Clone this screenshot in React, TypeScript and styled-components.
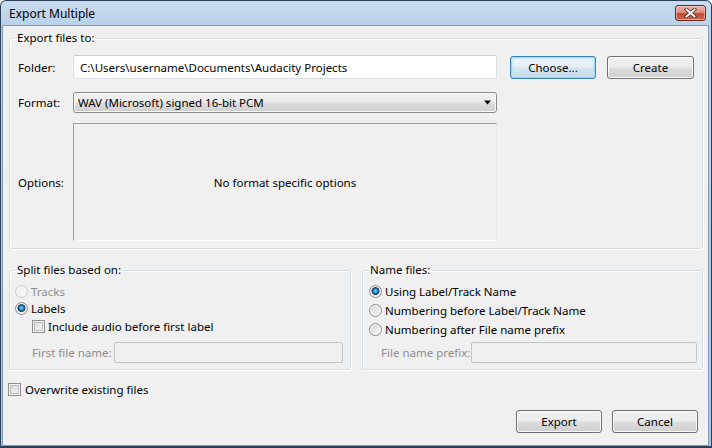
import React from "react";
import styled, { createGlobalStyle } from "styled-components";

const Global = createGlobalStyle`
  html, body { margin: 0; padding: 0; background: #ffffff; }
  body {
    font-family: "Noto Sans", "Open Sans", sans-serif;
    font-size: 11.5px;
    color: #000;
  }
  * { box-sizing: border-box; }
`;

const Window = styled.div`
  width: 712px;
  height: 448px;
  display: flex;
  flex-direction: column;
  background: linear-gradient(to bottom, #c9dbef 0px, #bad1eb 25px, #a9c4e5 100%);
  border: 1px solid #2c405a;
  border-bottom-width: 2px;
  border-radius: 6px 6px 0 0;
  padding: 0 2px 0 1px;
  overflow: hidden;
`;

const TitleBar = styled.div`
  height: 24px;
  flex: none;
  display: flex;
  align-items: flex-start;
  padding: 0 3px 0 7px;
`;

const Title = styled.span`
  line-height: 16px;
  margin-top: 5px;
  font-size: 12px;
  color: #000;
`;

const CloseButton = styled.div`
  margin-left: auto;
  margin-top: 4px;
  width: 31px;
  height: 16px;
  border: 1px solid #6b2a20;
  border-radius: 3px;
  background: linear-gradient(to bottom, #ecb3a6 0%, #dc8f7e 45%, #c9472e 55%, #d0654b 100%);
  box-shadow: inset 0 0 0 1px rgba(255, 220, 210, 0.55);
  display: flex;
  align-items: center;
  justify-content: center;
`;

const Content = styled.div`
  flex: 1;
  display: flex;
  flex-direction: column;
  background: #f0f0f0;
  border: 1px solid #7e9bbd;
  border-bottom-color: #3bb2e2;
  padding: 5px 5px 12px 6px;
`;

const Group = styled.fieldset`
  margin: 0;
  padding: 0;
  min-width: 0;
  border: 1px solid #d5dfe5;
  border-radius: 3px;
  box-shadow: 1px 1px 0 #ffffff, inset 1px 1px 0 #ffffff;
`;

const Legend = styled.legend`
  padding: 0 2px;
  margin-left: 5px;
  line-height: 14px;
  color: #000;
`;

const GroupBody = styled.div<{ $pad: string }>`
  display: flex;
  flex-direction: column;
  padding: ${(p) => p.$pad};
`;

const FieldRow = styled.div<{ $h: number; $mt?: number }>`
  display: flex;
  align-items: center;
  height: ${(p) => p.$h}px;
  margin-top: ${(p) => p.$mt ?? 0}px;
`;

const FieldLabel = styled.span`
  width: 55px;
  flex: none;
`;

const TextInput = styled.div`
  width: 424px;
  height: 24px;
  background: #ffffff;
  border: 1px solid #dde1e6;
  border-top-color: #c9ced4;
  border-radius: 2px;
  padding-left: 6px;
  display: flex;
  align-items: center;
  white-space: nowrap;
`;

const Button = styled.div<{ $w: number; $ml?: number; $default?: boolean }>`
  width: ${(p) => p.$w}px;
  height: 23px;
  margin-left: ${(p) => p.$ml ?? 0}px;
  flex: none;
  display: flex;
  align-items: center;
  justify-content: center;
  border: 1px solid ${(p) => (p.$default ? "#3c7fb1" : "#707070")};
  border-radius: 3px;
  background: ${(p) =>
    p.$default
      ? "linear-gradient(to bottom, #eef5fa 0%, #e4eef6 48%, #d5e4ef 52%, #c9dce9 100%)"
      : "linear-gradient(to bottom, #f2f2f2 0%, #ebebeb 48%, #dddddd 52%, #cfcfcf 100%)"};
  box-shadow: ${(p) =>
    p.$default
      ? "inset 0 0 0 1px #97dbf7, inset 0 0 2px 2px rgba(170, 225, 250, 0.5)"
      : "inset 0 0 0 1px #fbfbfb"};
  color: #000;
`;

const Select = styled.div`
  width: 424px;
  height: 21px;
  display: flex;
  align-items: center;
  justify-content: space-between;
  padding: 0 4px 0 4px;
  border: 1px solid #8b8b8b;
  border-radius: 3px;
  background: linear-gradient(to bottom, #f2f2f2 0%, #ebebeb 48%, #dddddd 52%, #cfcfcf 100%);
  box-shadow: inset 0 0 0 1px #fbfbfb;
  white-space: nowrap;
`;

const OptionsPanel = styled.div`
  width: 424px;
  height: 118px;
  border: 1px solid;
  border-color: #a0a0a0 #e8e8e8 #ffffff #a0a0a0;
  display: flex;
  align-items: center;
  justify-content: center;
`;

const BottomRow = styled.div`
  display: flex;
  gap: 11px;
  margin-top: 14px;
`;

const HalfGroup = styled(Group)<{ $w: number }>`
  width: ${(p) => p.$w}px;
  flex: none;
`;

const OptionRow = styled.label<{ $h: number; $indent?: number; $disabled?: boolean }>`
  display: flex;
  align-items: center;
  gap: 3px;
  height: ${(p) => p.$h}px;
  margin-left: ${(p) => p.$indent ?? 0}px;
  color: ${(p) => (p.$disabled ? "#8d8d8d" : "#000")};
  white-space: nowrap;
`;

const Radio = styled.span<{ $checked?: boolean; $disabled?: boolean }>`
  width: 13px;
  height: 13px;
  flex: none;
  border-radius: 50%;
  border: 1px solid ${(p) => (p.$disabled ? "#c9c9c9" : "#8e8f8f")};
  background: ${(p) =>
    p.$checked
      ? "radial-gradient(circle at 50% 45%, #a6e2fb 0px, #3b98d6 1.6px, #14558f 3px, #2b4c6a 3.8px, rgba(255,255,255,0) 4.3px), linear-gradient(135deg, #d4d4d4, #fbfbfb)"
      : p.$disabled
      ? "linear-gradient(135deg, #ececec, #fafafa)"
      : "linear-gradient(135deg, #d2d2d2, #fbfbfb)"};
  box-shadow: inset 0 0 0 1px ${(p) => (p.$disabled ? "#f6f6f6" : "#f4f4f4")};
`;

const Check = styled.span`
  width: 13px;
  height: 13px;
  flex: none;
  border: 1px solid #8e8f8f;
  background: linear-gradient(135deg, #d6d6d6, #f9f9f9);
  box-shadow: inset 0 0 0 1px #f6f6f6, inset 0 0 0 2px #b9bcc0;
`;

const SubRow = styled.div<{ $indent: number; $mt: number }>`
  display: flex;
  align-items: center;
  height: 21px;
  margin-left: ${(p) => p.$indent}px;
  margin-top: ${(p) => p.$mt}px;
`;

const SubLabel = styled.span<{ $w: number }>`
  width: ${(p) => p.$w}px;
  flex: none;
  color: #8d8d8d;
  white-space: nowrap;
`;

const DisabledInput = styled.div`
  flex: 1;
  height: 21px;
  border: 1px solid #c2c4c7;
  border-radius: 2px;
  background: #f0f0f0;
`;

const OverwriteRow = styled.label`
  display: flex;
  align-items: center;
  gap: 4px;
  height: 16px;
  margin-top: 11px;
  margin-left: -1px;
`;

const ActionRow = styled.div`
  margin-top: auto;
  display: flex;
  justify-content: flex-end;
  gap: 10px;
  padding-right: 5px;
`;

const CloseGlyph = () => (
  <svg width="13" height="10" viewBox="0 0 13 10">
    <path d="M2.5 1.5 L10.5 8.5 M10.5 1.5 L2.5 8.5" stroke="#4b3b39" strokeWidth="3.6" strokeLinecap="square" />
    <path d="M2.5 1.5 L10.5 8.5 M10.5 1.5 L2.5 8.5" stroke="#ffffff" strokeWidth="1.9" strokeLinecap="square" />
  </svg>
);

const Arrow = () => (
  <svg width="9" height="5" viewBox="0 0 9 5">
    <path d="M1 0.5 H8 L4.5 4.5 Z" fill="#000" />
  </svg>
);

export default function App() {
  return (
    <>
      <Global />
      <Window>
        <TitleBar>
          <Title>Export Multiple</Title>
          <CloseButton>
            <CloseGlyph />
          </CloseButton>
        </TitleBar>
        <Content>
          <Group>
            <Legend>Export files to:</Legend>
            <GroupBody $pad="10px 8px 7px 8px">
              <FieldRow $h={24}>
                <FieldLabel>Folder:</FieldLabel>
                <TextInput>C:\Users\username\Documents\Audacity Projects</TextInput>
                <Button $w={86} $ml={13} $default>
                  Choose...
                </Button>
                <Button $w={87} $ml={11}>
                  Create
                </Button>
              </FieldRow>
              <FieldRow $h={21} $mt={13}>
                <FieldLabel>Format:</FieldLabel>
                <Select>
                  <span>WAV (Microsoft) signed 16-bit PCM</span>
                  <Arrow />
                </Select>
              </FieldRow>
              <FieldRow $h={118} $mt={10}>
                <FieldLabel>Options:</FieldLabel>
                <OptionsPanel>No format specific options</OptionsPanel>
              </FieldRow>
            </GroupBody>
          </Group>

          <BottomRow>
            <HalfGroup $w={342}>
              <Legend>Split files based on:</Legend>
              <GroupBody $pad="6px 7px 6px 5px">
                <OptionRow $h={17} $disabled>
                  <Radio $disabled />
                  Tracks
                </OptionRow>
                <OptionRow $h={17}>
                  <Radio $checked />
                  Labels
                </OptionRow>
                <OptionRow $h={18} $indent={17}>
                  <Check />
                  Include audio before first label
                </OptionRow>
                <SubRow $indent={17} $mt={7}>
                  <SubLabel $w={82}>First file name:</SubLabel>
                  <DisabledInput />
                </SubRow>
              </GroupBody>
            </HalfGroup>
            <HalfGroup $w={341}>
              <Legend>Name files:</Legend>
              <GroupBody $pad="5px 5px 6px 6px">
                <OptionRow $h={19}>
                  <Radio $checked />
                  Using Label/Track Name
                </OptionRow>
                <OptionRow $h={19}>
                  <Radio />
                  Numbering before Label/Track Name
                </OptionRow>
                <OptionRow $h={19}>
                  <Radio />
                  Numbering after File name prefix
                </OptionRow>
                <SubRow $indent={12} $mt={3}>
                  <SubLabel $w={90}>File name prefix:</SubLabel>
                  <DisabledInput />
                </SubRow>
              </GroupBody>
            </HalfGroup>
          </BottomRow>

          <OverwriteRow>
            <Check />
            Overwrite existing files
          </OverwriteRow>

          <ActionRow>
            <Button $w={86}>Export</Button>
            <Button $w={86}>Cancel</Button>
          </ActionRow>
        </Content>
      </Window>
    </>
  );
}
